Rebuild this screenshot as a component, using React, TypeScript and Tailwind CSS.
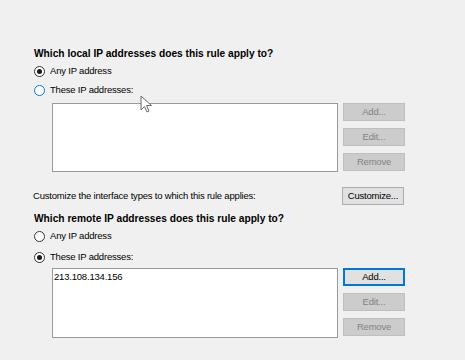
function Radio({ checked, hover }: { checked?: boolean; hover?: boolean }) {
  return (
    <span
      className={`flex h-[11px] w-[11px] items-center justify-center rounded-full border bg-white ${
        hover ? "border-[#0078d7]" : "border-[#333333]"
      }`}
    >
      {checked && <span className="h-[5px] w-[5px] rounded-full bg-[#1a1a1a]" />}
    </span>
  );
}

function RadioRow({ label, checked, hover }: { label: string; checked?: boolean; hover?: boolean }) {
  return (
    <div className="flex h-[19px] items-center gap-[5px]">
      <Radio checked={checked} hover={hover} />
      <span>{label}</span>
    </div>
  );
}

function Btn({ label, disabled, focused }: { label: string; disabled?: boolean; focused?: boolean }) {
  let cls = "border-[#adadad] bg-[#e1e1e1] text-black";
  if (disabled) cls = "border-[#bfbfbf] bg-[#cccccc] text-[#838383]";
  if (focused) cls = "border-[#0078d7] border-2 bg-[#e1e1e1] text-black";
  return (
    <div className={`flex h-[18px] w-[62px] items-center justify-center border ${cls}`}>
      {label}
    </div>
  );
}

function AddressBlock({ entries, active, height }: { entries: string[]; active?: boolean; height: string }) {
  return (
    <div className="ml-[18px] flex gap-[5px]">
      <div className={`w-[286px] border border-[#9a9a9a] bg-white px-[1px] pt-[1px] ${height}`}>
        {entries.map((e) => (
          <div key={e} className="h-[14px] leading-[14px]">
            {e}
          </div>
        ))}
      </div>
      <div className="flex flex-col gap-[7px]">
        <Btn label="Add..." disabled={!active} focused={active} />
        <Btn label="Edit..." disabled />
        <Btn label="Remove" disabled />
      </div>
    </div>
  );
}

export default function App() {
  return (
    <div
      className="relative h-[360px] w-[465px] overflow-hidden bg-[#f0f0f0] pl-[34px] pt-[47px] text-[9.5px] tracking-[-0.2px] text-black"
      style={{ fontFamily: '"Liberation Sans", Arial, sans-serif' }}
    >
      <div className="h-[14px] text-[10.2px] font-bold leading-[14px] tracking-normal">
        Which local IP addresses does this rule apply to?
      </div>
      <div className="mt-[1px]">
        <RadioRow label="Any IP address" checked />
        <RadioRow label="These IP addresses:" hover />
      </div>
      <div className="mt-[3px]">
        <AddressBlock entries={[]} height="h-[69px]" />
      </div>
      <div className="mt-[15px] flex h-[18px] items-center">
        <span className="-ml-[1px] w-[309px]">Customize the interface types to which this rule applies:</span>
        <Btn label="Customize..." />
      </div>
      <div className="mt-[7px] h-[14px] text-[10.2px] font-bold leading-[14px] tracking-normal">
        Which remote IP addresses does this rule apply to?
      </div>
      <div className="mt-[1px]">
        <RadioRow label="Any IP address" />
        <div className="mt-[2px]">
          <RadioRow label="These IP addresses:" checked />
        </div>
      </div>
      <div className="mt-[1px]">
        <AddressBlock entries={["213.108.134.156"]} active height="h-[70px]" />
      </div>

      {/* mouse pointer */}
      <svg className="absolute left-[140px] top-[95px]" width="14" height="19" viewBox="0 0 14 19">
        <path
          d="M1 1 L1 15 L4.5 11.5 L7 17 L9 16 L6.5 10.5 L11.5 10.5 Z"
          fill="white"
          stroke="#6b6b6b"
          strokeWidth="1"
          strokeLinejoin="round"
        />
      </svg>
    </div>
  );
}
